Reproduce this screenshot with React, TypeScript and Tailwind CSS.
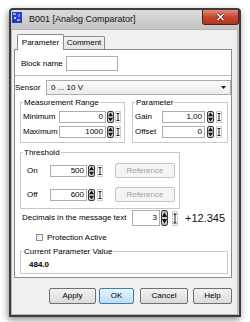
import React from "react";

function Spinner({ h = 12 }: { h?: number }) {
    return (
        <svg width={7} height={h} viewBox="0 0 7 12" preserveAspectRatio="none" className="shrink-0">
            <rect x={0.5} y={0.5} width={6} height={11} rx={1.5} fill="#cfcfcf" stroke="#3a3a3a" />
            <path d="M1 5.2 L3.5 1.6 L6 5.2Z" fill="#111" />
            <path d="M1 6.8 L3.5 10.4 L6 6.8Z" fill="#111" />
        </svg>
    );
}

function RefIcon({ h = 12 }: { h?: number }) {
    return (
        <svg width={6} height={h} viewBox="0 0 6 12" preserveAspectRatio="none" className="shrink-0">
            <rect x={0.5} y={0.5} width={5} height={11} fill="none" stroke="#9a9a9a" strokeDasharray="1 1" />
            <path d="M1.5 2.5h3M3 2.5v7M1.5 9.5h3" stroke="#1c2440" strokeWidth={1} fill="none" />
        </svg>
    );
}

function Field({ value, w, h = 12 }: { value: string; w: string; h?: number }) {
    return (
        <div className={`${w} ${h === 16 ? "h-[16px]" : "h-[12px]"} shrink-0 border border-[#abadb3] bg-white flex items-center justify-end pr-[2px]`}>
            {value}
        </div>
    );
}

function Group({ label, className, children }: { label: string; className: string; children?: React.ReactNode }) {
    return (
        <div className={`relative border border-[#c6c9cc] ${className}`}>
            <span className="absolute -top-[5px] left-[2px] bg-white px-[1px] leading-[9px]">{label}</span>
            {children}
        </div>
    );
}

function Btn({ label, className, primary }: { label: string; className: string; primary?: boolean }) {
    return (
        <div
            className={`${className} h-[16px] rounded-[2px] border flex items-center justify-center ${
                primary
                    ? "border-[#3c7fb1] bg-gradient-to-b from-[#eaf5fd] to-[#bfdcf4]"
                    : "border-[#707070] bg-gradient-to-b from-[#f3f3f3] to-[#dadada]"
            }`}
        >
            {label}
        </div>
    );
}

export default function App() {
    return (
        <div className="w-[250px] h-[322px] bg-white pt-[8px] pl-[9px] overflow-hidden font-['Liberation_Sans',Arial,sans-serif] text-[8px] leading-none text-black">
            <div className="w-[232px] h-[309px] flex flex-col rounded-t-[4px] border-2 border-[#3d3d3d] bg-[#c8c8c8] shadow-[-1px_3px_7px_rgba(0,0,0,0.45)]">
                {/* title bar */}
                <div className="h-[19px] flex items-start rounded-t-[3px] bg-gradient-to-b from-[#dadada] to-[#c4c4c4]">
                    <svg width={10} height={11} viewBox="0 0 10 11" className="ml-[1px] mt-[2px] shrink-0">
                        <rect width={10} height={11} fill="#2a3fc8" />
                        <rect x={1} y={1} width={3} height={2} fill="#8fa6ff" />
                        <rect x={6} y={2} width={2} height={3} fill="#6d86f5" />
                        <rect x={2} y={5} width={2} height={2} fill="#b9c6ff" />
                        <rect x={5} y={7} width={3} height={2} fill="#8fa6ff" />
                        <rect x={1} y={8} width={2} height={2} fill="#1a2890" />
                    </svg>
                    <span className="ml-[7px] self-center text-[9px] text-[#111]">B001 [Analog Comparator]</span>
                    <div className="ml-auto w-[37px] h-[15px] rounded-b-[3px] border border-t-0 border-[#5a1e14] bg-gradient-to-b from-[#e08a7c] via-[#c8432e] to-[#b03620] flex items-center justify-center">
                        <svg width={9} height={8} viewBox="0 0 9 8">
                            <path d="M1.5 1 L7.5 7 M7.5 1 L1.5 7" stroke="#5a1e14" strokeWidth={3} />
                            <path d="M1.5 1 L7.5 7 M7.5 1 L1.5 7" stroke="#fff" strokeWidth={1.6} />
                        </svg>
                    </div>
                </div>

                {/* client */}
                <div className="w-[227px] h-[286px] border border-[#b5b5b5] bg-[#f0f0f0] flex flex-col">
                    <div className="mt-[4px] h-[15px] flex items-end">
                        <div className="ml-[5px] w-[47px] h-[16px] -mb-px relative z-10 rounded-t-[2px] border border-b-0 border-[#898c95] bg-white flex items-center justify-center">
                            Parameter
                        </div>
                        <div className="w-[41px] h-[13px] rounded-tr-[2px] border border-l-0 border-b-0 border-[#898c95] bg-gradient-to-b from-[#f2f2f2] to-[#e3e3e3] flex items-center justify-center">
                            Comment
                        </div>
                    </div>

                    <div className="ml-[2px] w-[218px] h-[229px] border border-[#898c95] bg-white flex flex-col">
                        <div className="h-[26px] border-b border-[#b4b7bc] pt-[6px] pl-[6px]">
                            <div className="flex items-center h-[15px]">
                                <span className="w-[45px]">Block name</span>
                                <div className="w-[52px] h-[15px] border border-[#abadb3] bg-white" />
                            </div>
                        </div>

                        <div className="mt-[4px] flex items-center h-[15px]">
                            <span className="w-[31px]">Sensor</span>
                            <div className="w-[185px] h-[15px] border border-[#acacac] bg-gradient-to-b from-[#fbfbfb] to-[#ececec] flex items-center pl-[4px]">
                                <span>0 ... 10 V</span>
                                <svg width={5} height={3} viewBox="0 0 5 3" className="ml-auto mr-[4px]">
                                    <path d="M0 0 H5 L2.5 3Z" fill="#111" />
                                </svg>
                            </div>
                        </div>

                        <div className="mt-[7px] flex">
                            <Group label="Measurement Range" className="ml-[5px] w-[105px] h-[41px]">
                                <div className="pt-[8px] pl-[2px] flex flex-col gap-[3px]">
                                    <div className="flex items-center h-[12px]">
                                        <span className="w-[36px]">Minimum</span>
                                        <Field value="0" w="w-[47px]" />
                                        <span className="ml-[1px]"><Spinner /></span>
                                        <span className="ml-[1px]"><RefIcon /></span>
                                    </div>
                                    <div className="flex items-center h-[12px]">
                                        <span className="w-[36px]">Maximum</span>
                                        <Field value="1000" w="w-[47px]" />
                                        <span className="ml-[1px]"><Spinner /></span>
                                        <span className="ml-[1px]"><RefIcon /></span>
                                    </div>
                                </div>
                            </Group>
                            <Group label="Parameter" className="ml-[7px] w-[96px] h-[41px]">
                                <div className="pt-[8px] pl-[2px] flex flex-col gap-[3px]">
                                    <div className="flex items-center h-[12px]">
                                        <span className="w-[27px]">Gain</span>
                                        <Field value="1,00" w="w-[43px]" />
                                        <span className="ml-[2px]"><Spinner /></span>
                                        <span className="ml-[2px]"><RefIcon /></span>
                                    </div>
                                    <div className="flex items-center h-[12px]">
                                        <span className="w-[27px]">Offset</span>
                                        <Field value="0" w="w-[43px]" />
                                        <span className="ml-[2px]"><Spinner /></span>
                                        <span className="ml-[2px]"><RefIcon /></span>
                                    </div>
                                </div>
                            </Group>
                        </div>

                        <Group label="Threshold" className="mt-[9px] ml-[5px] w-[160px] h-[57px]">
                            <div className="pt-[10px] pl-[6px] flex flex-col gap-[9px]">
                                {[["On", "500"], ["Off", "600"]].map(([l, v]) => (
                                    <div key={l} className="flex items-center h-[15px]">
                                        <span className="w-[23px]">{l}</span>
                                        <Field value={v} w="w-[37px]" />
                                        <span className="ml-[1px]"><Spinner /></span>
                                        <span className="ml-[2px]"><RefIcon /></span>
                                        <div className="ml-[12px] w-[60px] h-[15px] rounded-[2px] border border-[#c3c3c3] bg-[#f4f4f4] text-[#a3a3a3] flex items-center justify-center">
                                            Reference
                                        </div>
                                    </div>
                                ))}
                            </div>
                        </Group>

                        <div className="mt-[1px] flex items-center h-[16px] pl-[7px]">
                            <span className="w-[110px]">Decimals in the message text</span>
                            <Field value="3" w="w-[28px]" h={16} />
                            <span className="ml-[1px]"><Spinner h={16} /></span>
                            <span className="ml-[4px]"><RefIcon h={15} /></span>
                            <span className="ml-[7px] text-[11px] text-[#111]">+12.345</span>
                        </div>

                        <div className="mt-[7px] flex items-center h-[9px] pl-[21px]">
                            <div className="w-[7px] h-[7px] border border-[#8f8f8f] bg-gradient-to-br from-[#e2e2e2] to-white" />
                            <span className="ml-[4px]">Protection Active</span>
                        </div>

                        <Group label="Current Parameter Value" className="mt-[9px] ml-[5px] w-[208px] h-[23px]">
                            <div className="pt-[9px] pl-[8px] font-bold">484.0</div>
                        </Group>
                    </div>

                    <div className="mt-[10px] flex">
                        <Btn label="Apply" className="ml-[37px] w-[47px]" />
                        <Btn label="OK" className="ml-[3px] w-[35px]" primary />
                        <Btn label="Cancel" className="ml-[6px] w-[48px]" />
                        <Btn label="Help" className="ml-[5px] w-[39px]" />
                    </div>
                </div>
            </div>
        </div>
    );
}
